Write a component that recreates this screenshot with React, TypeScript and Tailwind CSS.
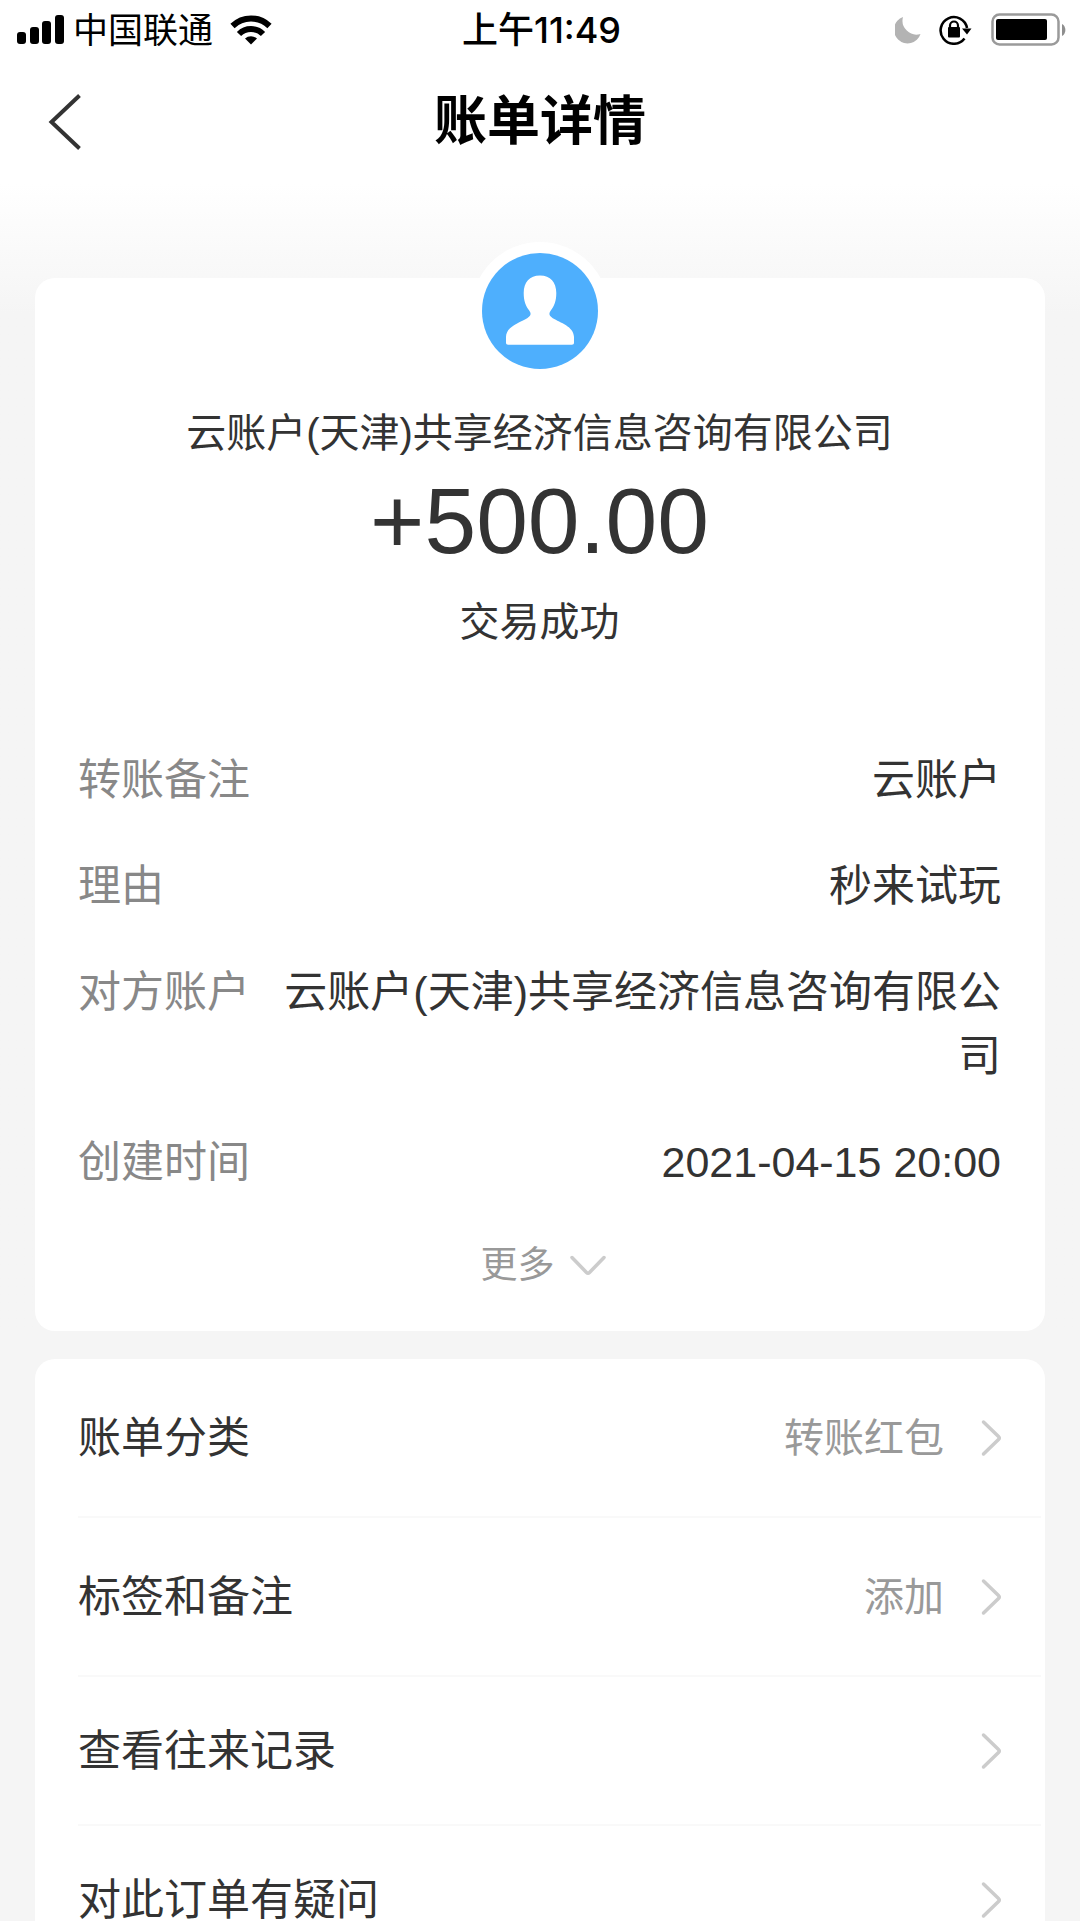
import React from 'react'

interface DetailItem {
    label: string
    value: string
}

interface ActionItem {
    label: string
    value?: string
}

const details: DetailItem[] = [
    { label: '转账备注', value: '云账户' },
    { label: '理由', value: '秒来试玩' },
    { label: '对方账户', value: '云账户(天津)共享经济信息咨询有限公司' },
    { label: '创建时间', value: '2021-04-15 20:00' },
]

const actions: ActionItem[] = [
    { label: '账单分类', value: '转账红包' },
    { label: '标签和备注', value: '添加' },
    { label: '查看往来记录' },
    { label: '对此订单有疑问' },
]

const SignalIcon = () => (
    <svg width="47" height="30" viewBox="0 0 47 30" fill="#000">
        <rect x="0" y="17" width="9" height="12" rx="3" />
        <rect x="13" y="12" width="9" height="17" rx="3" />
        <rect x="25" y="6" width="9" height="23" rx="3" />
        <rect x="38" y="0" width="9" height="29" rx="3" />
    </svg>
)

const WifiIcon = () => (
    <svg width="42" height="30" viewBox="0 0 42 30" fill="none" stroke="#000" strokeWidth="6">
        <path d="M2.500 11a26.500 26.500 0 0 1 37 0" />
        <path d="M9 19a17 17 0 0 1 24 0" />
        <path d="M15 23.500a9 9 0 0 1 12 0L21 29.500z" fill="#000" stroke="none" />
    </svg>
)

const MoonIcon = () => (
    <svg width="26" height="27" viewBox="0 0 26 27" fill="#b3b3b3">
        <path d="M8 0A13.600 13.600 0 1 0 25.500 17A14 14 0 0 1 8 0z" />
    </svg>
)

const RotationLockIcon = () => (
    <svg width="34" height="30" viewBox="0 0 34 30" fill="none" stroke="#000">
        <path d="M25.500 23.500A13.300 13.300 0 1 1 28 13" strokeWidth="2.600" />
        <path d="M23 13.500h9.500L28 19.500z" fill="#000" stroke="none" />
        <rect x="9" y="12" width="12" height="10.500" rx="1" fill="#000" stroke="none" />
        <path d="M11 13v-2.500a4 4 0 0 1 8 0V13" strokeWidth="2.200" />
    </svg>
)

const BatteryIcon = () => (
    <svg width="75" height="34" viewBox="0 0 75 34">
        <rect x="1.500" y="1.500" width="66" height="30" rx="7" fill="none" stroke="#9a9a9a" strokeWidth="2.500" />
        <rect x="5" y="6" width="51" height="21" rx="2" fill="#000" />
        <path d="M71 11c4.500 2 4.500 10 0 12z" fill="#8e8e8e" />
    </svg>
)

const AvatarIcon = () => (
    <svg className="size-[116px]" viewBox="0 0 116 116">
        <circle cx="58" cy="58" r="58" fill="#4eaffd" />
        <path
            d="M58 22.500c-10.500 0-16.300 7-16.300 17.500 0 8 2 13 5.500 17.500 2.300 3 1.800 5.500-2 7.700C38 69.500 24 73.500 24 84v5.500c0 1.500.700 2.200 2.200 2.200h63.600c1.500 0 2.200-.700 2.200-2.200V84c0-10.500-14-14.500-21.200-18.800-3.800-2.200-4.300-4.700-2-7.700 3.500-4.500 5.500-9.500 5.500-17.500 0-10.500-5.800-17.500-16.300-17.500z"
            fill="#fff"
        />
    </svg>
)

const StatusBar = () => (
    <div className="grid grid-cols-[1fr_auto_1fr] items-center h-[60px] pl-[17px] pr-[14px] text-[35px] leading-none text-black">
        <div className="flex items-center gap-[9px]">
            <SignalIcon />
            <span>中国联通</span>
            <span className="ml-2">
                <WifiIcon />
            </span>
        </div>
        <time className="font-['Inter','Noto_Sans_CJK_SC',sans-serif] text-[36px] font-medium">上午11:49</time>
        <div className="flex items-center justify-end gap-[18px]">
            <MoonIcon />
            <RotationLockIcon />
            <BatteryIcon />
        </div>
    </div>
)

const TitleBar = () => (
    <header className="grid grid-cols-[1fr_auto_1fr] items-center h-[124px] px-12">
        <button type="button" aria-label="返回" className="justify-self-start">
            <svg width="34" height="56" viewBox="0 0 34 56" fill="none" stroke="#333" strokeWidth="4">
                <path d="M31.500 1.500L3.500 28l28 26.500" />
            </svg>
        </button>
        <h1 className="text-[53px] leading-[72px] font-bold text-black">账单详情</h1>
    </header>
)

const DetailRow = ({ label, value }: DetailItem) => (
    <div className="flex justify-between gap-8">
        <dt className="shrink-0 text-[#888]">{label}</dt>
        <dd className="text-right text-[#333] break-all">{value}</dd>
    </div>
)

const ActionRow = ({ label, value }: ActionItem) => (
    <li className="ml-[43px] mr-1 border-t-2 border-[#f9f9f9] first:border-t-0">
        <a href="#" className={`flex items-center justify-between pr-[38px] ${value ? 'h-[157px]' : 'h-[147px]'}`}>
            <span className="text-[43px] leading-[64px] text-[#333]">{label}</span>
            <span className="flex items-center gap-[37px] text-[40px] text-[#999]">
                {value}
                <svg
                    width="22"
                    height="38"
                    viewBox="0 0 22 38"
                    fill="none"
                    stroke="#ccc"
                    strokeWidth="3.5"
                    strokeLinecap="round"
                >
                    <path d="M2.500 3l15 14.500q1.500 1.500 0 3L2.500 35" />
                </svg>
            </span>
        </a>
    </li>
)

const App = () => {
    return (
        <div
            lang="zh-CN"
            className="flex flex-col h-screen bg-[#f5f5f5] font-['Liberation_Sans','Noto_Sans_CJK_SC',sans-serif]"
        >
            <div className="bg-white">
                <StatusBar />
                <TitleBar />
            </div>
            <main className="flex-1 overflow-y-auto [scrollbar-width:none]">
                <div className="px-[35px] pt-[94px] bg-linear-to-b from-white to-[#f5f5f5] to-[130px]">
                    <section className="rounded-[20px] bg-white pl-[43px] pr-11 pb-[33px]">
                        <div className="flex flex-col items-center text-[40px] leading-[56px] text-[#333]">
                            <div className="-mt-9 rounded-full bg-white p-[11px]">
                                <AvatarIcon />
                            </div>
                            <h2 className="mt-[25px]">云账户(天津)共享经济信息咨询有限公司</h2>
                            <p className="mt-2 text-[93px] leading-[104px]">+500.00</p>
                            <p className="mt-[21px]">交易成功</p>
                        </div>
                        <dl className="flex flex-col gap-[42px] mt-[98px] text-[43px] leading-[64px]">
                            {details.map((item) => (
                                <DetailRow key={item.label} {...item} />
                            ))}
                        </dl>
                        <button
                            type="button"
                            className="flex items-center gap-[14px] mx-auto mt-10 pl-2 text-[37px] leading-[64px] text-[#999]"
                        >
                            更多
                            <svg
                                width="38"
                                height="22"
                                viewBox="0 0 38 22"
                                fill="none"
                                stroke="#ccc"
                                strokeWidth="3.5"
                                strokeLinecap="round"
                            >
                                <path d="M3 2.500l14.500 15q1.500 1.500 3 0L35 2.500" />
                            </svg>
                        </button>
                    </section>
                </div>
                <nav className="px-[35px] pt-7">
                    <ul className="rounded-[20px] bg-white">
                        {actions.map((item) => (
                            <ActionRow key={item.label} {...item} />
                        ))}
                    </ul>
                </nav>
            </main>
        </div>
    )
}

export default App
